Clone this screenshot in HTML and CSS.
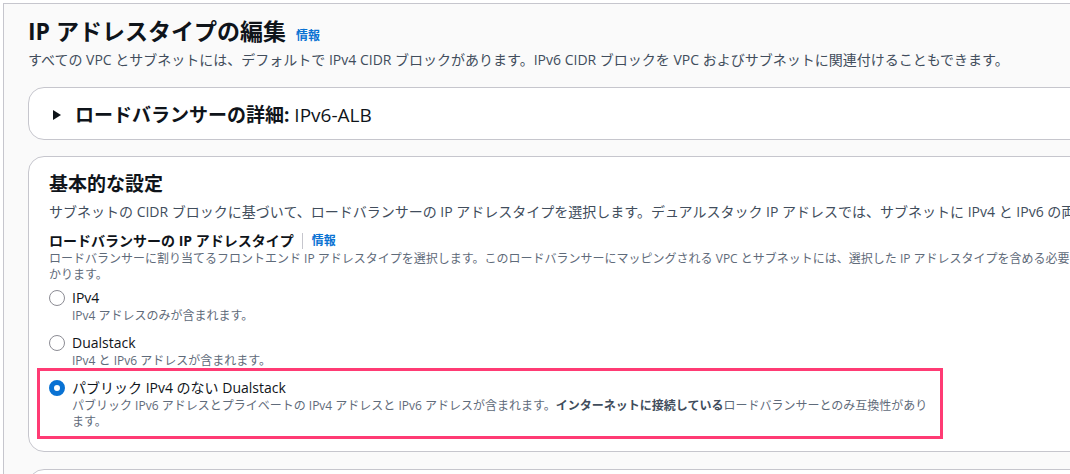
FILE: index.html
```html
<!DOCTYPE html>
<html lang="ja">
<head>
<meta charset="utf-8">
<title>IP アドレスタイプの編集</title>
<link rel="stylesheet" href="styles.css">
</head>
<body>
<div class="frame">
  <header class="page-head">
    <h1 class="title">IP アドレスタイプの編集<a class="info info-title">情報</a></h1>
    <p class="lead">すべての VPC とサブネットには、デフォルトで IPv4 CIDR ブロックがあります。IPv6 CIDR ブロックを VPC およびサブネットに関連付けることもできます。</p>
  </header>

  <section class="card card-collapsed">
    <svg class="caret" width="10" height="12" viewBox="0 0 10 12" aria-hidden="true"><path d="M1 1 L9 6 L1 11 Z" fill="#0f141a"/></svg>
    <h2 class="card-title"><b>ロードバランサーの詳細:</b> IPv6-ALB</h2>
  </section>

  <section class="card card-main">
    <h2 class="section-title">基本的な設定</h2>
    <p class="section-desc">サブネットの CIDR ブロックに基づいて、ロードバランサーの IP アドレスタイプを選択します。デュアルスタック IP アドレスでは、サブネットに IPv4 と IPv6 の両方の CIDR ブロックが必要です。</p>

    <div class="field">
      <div class="field-label"><span>ロードバランサーの IP アドレスタイプ</span><span class="sep"></span><a class="info">情報</a></div>
      <p class="field-desc">ロードバランサーに割り当てるフロントエンド IP アドレスタイプを選択します。このロードバランサーにマッピングされる VPC とサブネットには、選択した IP アドレスタイプを含める必要があることがわ<br>かります。</p>

      <div class="radio-group">
        <div class="radio">
          <span class="dot"></span>
          <div class="radio-text">
            <div class="radio-label">IPv4</div>
            <div class="radio-desc">IPv4 アドレスのみが含まれます。</div>
          </div>
        </div>
        <div class="radio">
          <span class="dot"></span>
          <div class="radio-text">
            <div class="radio-label">Dualstack</div>
            <div class="radio-desc">IPv4 と IPv6 アドレスが含まれます。</div>
          </div>
        </div>
        <div class="radio radio-highlight">
          <span class="dot dot-checked"></span>
          <div class="radio-text">
            <div class="radio-label">パブリック IPv4 のない Dualstack</div>
            <div class="radio-desc nowrap">パブリック IPv6 アドレスとプライベートの IPv4 アドレスと IPv6 アドレスが含まれます。<b>インターネットに接続している</b>ロードバランサーとのみ互換性があり<br>ます。</div>
          </div>
        </div>
      </div>
    </div>
  </section>

  <section class="card card-next"></section>
</div>
</body>
</html>
```

FILE: styles.css
```css
html, body {
  margin: 0;
  padding: 0;
  background: #ffffff;
  overflow: hidden;
  height: 474px;
}

body {
  font-family: "Open Sans", "Noto Sans CJK JP", sans-serif;
  color: #0f141a;
}

.frame {
  margin: 3px 0 0 3px;
  border-top: 1px solid #c6c6cd;
  border-left: 1px solid #c6c6cd;
  background: #fafafa;
  padding: 0 0 0 24px;
  width: 1300px;
  height: 480px;
  box-sizing: border-box;
}

.page-head {
  padding-top: 12px;
}

.title {
  margin: 0;
  font-size: 23px;
  line-height: 30px;
  font-weight: 700;
  display: flex;
  align-items: baseline;
}

.info {
  color: #0972d3;
  font-size: 12px;
  font-weight: 700;
  line-height: 16px;
  text-decoration: none;
}

.info-title {
  margin-left: 10px;
}

.lead {
  margin: 4px 0 0;
  font-size: 14px;
  line-height: 20px;
  color: #414d5c;
  white-space: nowrap;
}

.card {
  width: 1200px;
  box-sizing: border-box;
  background: #ffffff;
  border: 1px solid #c6c6cd;
  border-radius: 16px;
}

.card-collapsed {
  margin-top: 17px;
  height: 53px;
  display: flex;
  align-items: center;
  padding: 2px 0 0 23px;
}

.caret {
  display: block;
  margin-right: 13px;
}

.card-title {
  margin: 0;
  font-size: 19px;
  line-height: 26px;
  font-weight: 400;
}

.card-title b {
  font-weight: 700;
}

.card-main {
  margin-top: 16px;
  padding: 15px 20px 21px 20px;
}

.section-title {
  margin: 0;
  font-size: 19px;
  line-height: 24px;
  font-weight: 700;
}

.section-desc {
  margin: 6px 0 0;
  font-size: 14px;
  line-height: 20px;
  color: #414d5c;
  white-space: nowrap;
}

.field {
  margin-top: 9px;
}

.field-label {
  display: flex;
  align-items: center;
  font-size: 14px;
  line-height: 20px;
  font-weight: 700;
}

.sep {
  display: inline-block;
  width: 1px;
  height: 16px;
  background: #c6c6cd;
  margin: 0 9px 0 8px;
}

.field-desc {
  margin: 0;
  font-size: 12px;
  line-height: 16px;
  color: #5f6b7a;
  white-space: nowrap;
}

.radio-group {
  margin-top: 5px;
  display: flex;
  flex-direction: column;
  gap: 9px;
}

.radio {
  display: flex;
  align-items: flex-start;
  gap: 7px;
}

.radio-highlight {
  position: relative;
}

.radio-highlight::after {
  content: "";
  position: absolute;
  left: -12px;
  top: -10px;
  width: 906px;
  height: 71px;
  box-sizing: border-box;
  border: 3px solid #ff3b74;
  pointer-events: none;
}

.dot {
  flex: none;
  width: 16px;
  height: 16px;
  margin-top: 2px;
  box-sizing: border-box;
  border: 1.5px solid #8c8c94;
  border-radius: 50%;
  background: #ffffff;
}

.dot-checked {
  border: 5px solid #0972d3;
}

.radio-label {
  font-size: 14px;
  line-height: 20px;
}

.radio-desc {
  font-size: 12px;
  line-height: 16px;
  color: #5f6b7a;
}

.radio-desc b {
  font-weight: 700;
  color: #414d5c;
}

.nowrap {
  white-space: nowrap;
}

.card-next {
  margin-top: 17px;
  height: 60px;
}
```
